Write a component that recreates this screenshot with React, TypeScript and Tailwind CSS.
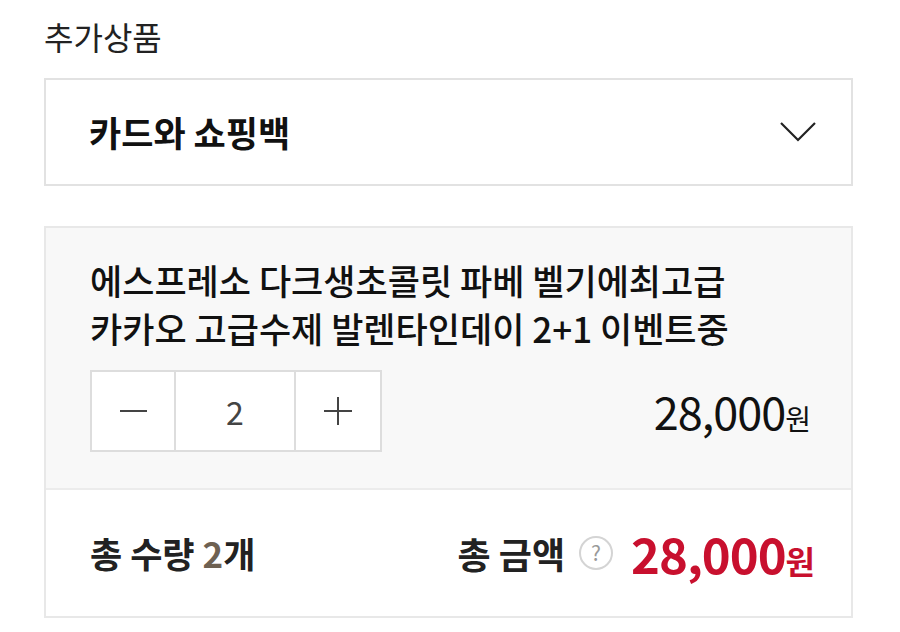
import React from "react";

const font = { fontFamily: '"Noto Sans CJK KR", "Noto Sans", sans-serif' };

function Chevron() {
  return (
    <svg width="38" height="22" viewBox="0 0 38 22" fill="none">
      <path d="M2 2 L19 19 L36 2" stroke="#222" strokeWidth="2.2" />
    </svg>
  );
}

function Stepper({ qty }: { qty: number }) {
  return (
    <div className="flex h-[82px] border-2 border-[#dddddd] bg-white">
      <button className="flex w-[84px] items-center justify-center border-r-2 border-[#dddddd]">
        <span className="block h-[2px] w-[27px] bg-[#444]" />
      </button>
      <div className="flex w-[120px] items-center justify-center border-r-2 border-[#dddddd] text-[32px] text-[#444]">
        {qty}
      </div>
      <button className="relative flex w-[84px] items-center justify-center">
        <span className="block h-[2px] w-[28px] bg-[#444]" />
        <span className="absolute h-[28px] w-[2px] bg-[#444]" />
      </button>
    </div>
  );
}

export default function App() {
  return (
    <div className="h-[632px] w-[900px] bg-white pl-[44px] pr-[47px] pt-[12px]" style={font}>
      <h2 className="text-[32px] leading-[48px] text-[#222]">추가상품</h2>

      <div className="mt-[18px] flex h-[108px] items-center justify-between border-2 border-[#e2e2e2] pl-[43px] pr-[34px]">
        <span className="text-[35px] font-bold text-[#111]">카드와 쇼핑백</span>
        <Chevron />
      </div>

      <div className="mt-[40px] border-2 border-[#e8e8e8]">
        <div className="bg-[#f8f8f8] pb-[36px] pl-[44px] pr-[40px] pt-[28px]">
          <p className="text-[35px] font-medium leading-[48px] text-[#111]">
            에스프레소 다크생초콜릿 파베 벨기에최고급
            <br />
            카카오 고급수제 발렌타인데이 2+1 이벤트중
          </p>
          <div className="mt-[18px] flex items-center justify-between">
            <Stepper qty={2} />
            <div className="flex items-baseline text-[#111]">
              <span className="text-[45px] tracking-[-1px]">28,000</span>
              <span className="text-[28px]">원</span>
            </div>
          </div>
        </div>
        <div className="flex h-[128px] items-center justify-between border-t-2 border-[#ececec] bg-white pl-[44px] pr-[36px]">
          <span className="text-[35px] font-bold text-[#222]">
            총 수량 <span className="text-[#6e6152]">2</span>개
          </span>
          <div className="flex items-center">
            <span className="text-[36px] font-bold text-[#222]">총 금액</span>
            <span className="ml-[14px] flex h-[34px] w-[34px] items-center justify-center rounded-full border-2 border-[#d4d4d4] text-[21px] text-[#999]">
              ?
            </span>
            <span className="ml-[18px] flex items-baseline text-[#c8102e]">
              <span className="text-[49px] font-bold tracking-[-1px]">28,000</span>
              <span className="text-[32px] font-bold">원</span>
            </span>
          </div>
        </div>
      </div>
    </div>
  );
}
